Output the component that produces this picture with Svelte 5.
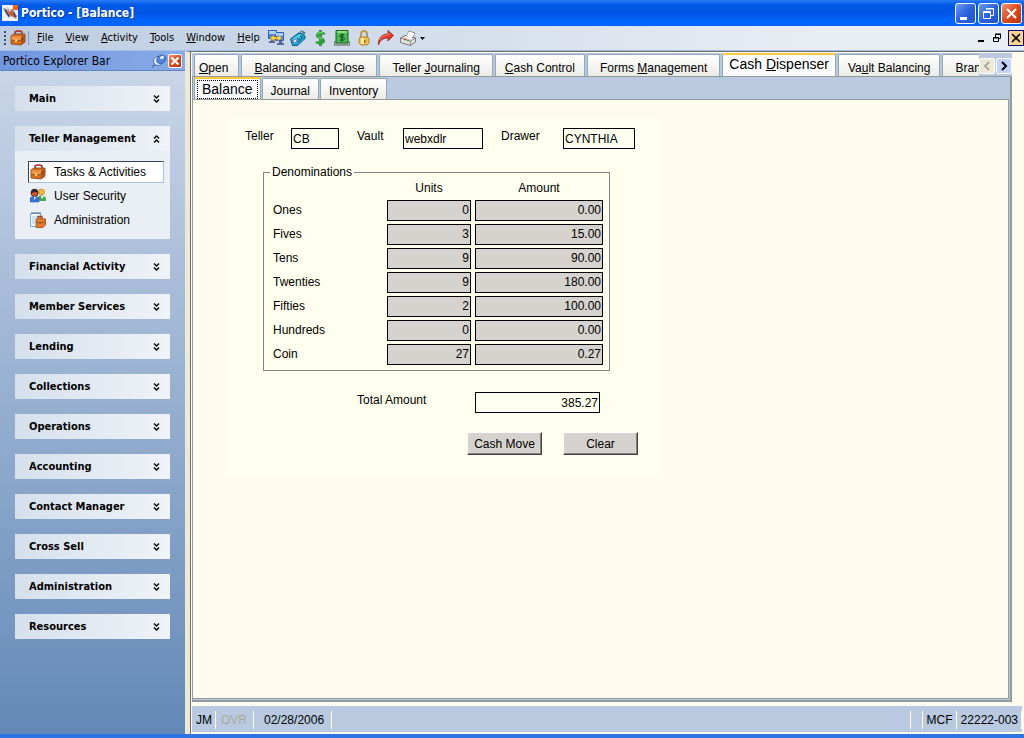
<script lang="ts">
  const menus = [
    ['F', 'ile'],
    ['V', 'iew'],
    ['A', 'ctivity'],
    ['T', 'ools'],
    ['W', 'indow'],
    ['H', 'elp']
  ];

  // before / access key / after
  const tabs = [
    { text: ['', 'O', 'pen'], kind: 'short' },
    { text: ['', 'B', 'alancing and Close'], kind: '' },
    { text: ['Teller ', 'J', 'ournaling'], kind: '' },
    { text: ['', 'C', 'ash Control'], kind: 'tight' },
    { text: ['Forms ', 'M', 'anagement'], kind: '' },
    { text: ['Cash ', 'D', 'ispenser'], kind: 'active' },
    { text: ['Va', 'u', 'lt Balancing'], kind: 'tight' },
    { text: ['Bran', '', ''], kind: '' }
  ];

  const sections = [
    'Main',
    'Teller Management',
    'Financial Activity',
    'Member Services',
    'Lending',
    'Collections',
    'Operations',
    'Accounting',
    'Contact Manager',
    'Cross Sell',
    'Administration',
    'Resources'
  ];

  const links = ['Tasks & Activities', 'User Security', 'Administration'];

  const rows = [
    { name: 'Ones', units: '0', amount: '0.00' },
    { name: 'Fives', units: '3', amount: '15.00' },
    { name: 'Tens', units: '9', amount: '90.00' },
    { name: 'Twenties', units: '9', amount: '180.00' },
    { name: 'Fifties', units: '2', amount: '100.00' },
    { name: 'Hundreds', units: '0', amount: '0.00' },
    { name: 'Coin', units: '27', amount: '0.27' }
  ];

  let open = $state('Teller Management');
  let selected = $state('Tasks & Activities');
</script>

{#snippet briefcase()}
  <svg class="icon" viewBox="0 0 16 16" aria-hidden="true">
    <path d="M5 4V2l2-1h3l2 1v2" fill="none" stroke="#a82a20" stroke-width="1.500" />
    <path d="M1 6l3-2h11v8l-4 3-10-1z" fill="#d9701f" stroke="#7c3d18" stroke-width=".8" />
    <path d="M1.500 6.500H11v4l-5 1-4.500-1z" fill="#f0994a" />
    <path d="M11 7l4-3v8l-4 3z" fill="#b4521a" />
    <path d="M1.500 10l5 1.500L11 10l4-2.500" fill="none" stroke="#7c3d18" stroke-width=".8" />
    <path d="M5 9.500h2v2.500H5z" fill="#f7d25a" />
  </svg>
{/snippet}

<div class="window">
  <header class="title-bar">
    <svg class="icon" viewBox="0 0 16 16" aria-hidden="true">
      <path d="M0 0h16v16H0z" fill="#f1f0f5" />
      <path d="M11 0h5v5h-5z" fill="#ff6400" />
      <path d="M1 3l4 1 4 7-2 2-3-4zM9 5l2-1 4 7-1 3-3-3z" fill="#858ba1" />
      <path d="M5 1l3 6 1-3 2 5 2 4-4-2-2-3z" fill="#e6541e" />
      <path d="M3 5l4 6M11 8l3 4" stroke="#303750" stroke-width="1.200" />
    </svg>
    <h1>Portico - [Balance]</h1>
    <div class="window-buttons">
      <button aria-label="Minimize">
        <svg viewBox="0 0 19 19"><path d="M4 13h7v3H4z" fill="#fff" /></svg>
      </button>
      <button aria-label="Restore">
        <svg viewBox="0 0 19 19" fill="none" stroke="#fff">
          <path d="M7.500 6V4.500h7v7H12M7 5h8" />
          <path d="M4.500 7.500h7v7h-7zM4 8.500h8" />
        </svg>
      </button>
      <button class="close" aria-label="Close">
        <svg viewBox="0 0 19 19"><path d="M5 5l9 9M14 5l-9 9" stroke="#fff" stroke-width="2.200" /></svg>
      </button>
    </div>
  </header>

  <nav class="menu-bar">
    <span class="grip"></span>
    {@render briefcase()}
    <span class="divider"></span>
    {#each menus as [key, rest]}
      <button class="menu"><u>{key}</u>{rest}</button>
    {/each}
    <div class="tools">
      <button aria-label="Transfer">
        <svg class="icon" viewBox="0 0 16 16">
          <path d="M.5.500h8v8h-8zM7.500 2.500h8v8h-8z" fill="#4c87e4" stroke="#2d5fb5" />
          <path d="M1 1h7v3H1zM8 3h7v3H8z" fill="#a8d0fa" />
          <path d="M1 11h6v2H1zM9 13h7v2H9zM3 9h2v2H3zM11 11h3v2h-3z" fill="#56699f" />
          <path d="M2 8l4-3v2h4V5l4 3-4 3V9H6v2z" fill="#ffdc4c" stroke="#b77b16" stroke-width=".6" />
        </svg>
      </button>
      <button aria-label="Tag">
        <svg class="icon" viewBox="0 0 16 16">
          <path d="M.5 9l8-6 5 1 2 4-8 7.500h-5z" fill="#22a4cb" stroke="#075d83" />
          <path d="M2 9l7-5 3 1-7 6z" fill="#55c6e3" />
          <path d="M8 12l5-5M10 6l2 1M7 8l2 2" stroke="#075d83" />
          <circle cx="5" cy="11" r="1.700" fill="#f4d9ff" stroke="#86549c" stroke-width=".6" />
          <path d="M10 3c0-3 4-2 4 0M12 3c3-3 4 1 1 2" fill="none" stroke="#16647e" />
        </svg>
      </button>
      <button aria-label="Cash">
        <svg class="icon" viewBox="0 0 16 16">
          <path d="M13 4c-3-2-8-1-7 2 1 2 6 2 6 5 0 2-4 3-7 1M9 0v16" fill="none" stroke="#686e65" stroke-width="2" />
          <path d="M12 4C9 2 4 3 5 6c1 2 6 2 6 5 0 2-4 3-7 1M8 0v16" fill="none" stroke="#27a537" stroke-width="2.200" />
          <path d="M11 3C8 2 5 3 5 5M7 7l3 2" fill="none" stroke="#8be878" />
        </svg>
      </button>
      <button aria-label="Dispense">
        <svg class="icon" viewBox="0 0 16 16">
          <path d="M0 12h16v3H0z" fill="#bec5c0" stroke="#56625a" />
          <path d="M2 .5h12V13H2z" fill="#4cb653" stroke="#17632a" />
          <path d="M3 1h10v2H3z" fill="#90df83" />
          <path d="M10 5H7.500C5.500 5 6 7.500 7.500 7.500H9c2 0 2 2.500 0 2.500H6M8 3.500v8" fill="none" stroke="#094318" />
        </svg>
      </button>
      <button aria-label="Lock">
        <svg class="icon" viewBox="0 0 16 16">
          <path d="M5 7V4c0-4 6-4 6 0v3" fill="none" stroke="#b99a5c" stroke-width="2" />
          <path d="M4 7h8l1 2v4l-2 2H5l-2-2V9z" fill="#f2bf52" stroke="#a96f23" stroke-width=".8" />
          <path d="M5 8h3v6H5z" fill="#fff0a4" />
          <path d="M8 10h1.500v3H8z" fill="#9e6820" />
        </svg>
      </button>
      <button aria-label="Go">
        <svg class="icon" viewBox="0 0 16 16">
          <path d="M.5 15C0 8 4 4 10 4V.5l5.500 5L10 11V8c-5 0-8 2-9.500 7z" fill="#e23625" stroke="#9d1e19" stroke-width=".8" />
          <path d="M2 10c1-3 4-5 9-5V3" fill="none" stroke="#ff8e73" />
        </svg>
      </button>
      <button class="print" aria-label="Print">
        <svg class="icon" viewBox="0 0 16 16">
          <path d="M6 7l3-6 6 2-3 6z" fill="#fff" stroke="#777" stroke-width=".8" />
          <path d="M.5 8L5 5.500 15.500 8v4l-5 3.500-10-3z" fill="#e2e0da" stroke="#5e5e5e" stroke-width=".8" />
          <path d="M.5 8l10 3 5-3M10.500 11v4" fill="none" stroke="#777" stroke-width=".8" />
          <path d="M6 7l3-5 5 2-3 5z" fill="#fff" />
          <path d="M4 9.500h2" stroke="#d2302a" stroke-width="1.500" />
          <path d="M7 10.500h2" stroke="#35a643" stroke-width="1.500" />
        </svg>
        <svg class="arrow" viewBox="0 0 5 3"><path d="M0 0h5L2.500 3z" /></svg>
      </button>
    </div>
    <div class="child-buttons">
      <button aria-label="Minimize child">
        <svg class="small-icon" viewBox="0 0 10 10"><path d="M2 7h6v2H2z" /></svg>
      </button>
      <button aria-label="Restore child">
        <svg class="small-icon" viewBox="0 0 10 10">
          <path d="M3.500 4V1.500h5v4H7M3 1h6M1.500 4.500h5v4h-5zM1 5h6" fill="none" stroke="#000" />
        </svg>
      </button>
      <button class="child-close" aria-label="Close child">
        <svg class="small-icon" viewBox="0 0 10 10"><path d="M1 1l8 8M9 1L1 9" stroke="#000" stroke-width="1.600" /></svg>
      </button>
    </div>
  </nav>

  <div class="work-area">
    <aside>
      <div class="explorer-title">
        <span>Portico Explorer Bar</span>
        <button aria-label="Pin">
          <svg class="icon" viewBox="0 0 16 16">
            <path d="M1 14l5-4" stroke="#5068a1" stroke-width="1.500" />
            <circle cx="7" cy="8" r="4.500" fill="#e1edff" stroke="#4470c2" />
            <path d="M6 9c-1-4 2-7 6-7 3 1 4 4 1 7-2 2-5 2-7 0z" fill="#5686dc" stroke="#3156a9" />
            <path d="M9 6c0-3 2-4 4-3l-1 3z" fill="#e1edff" />
          </svg>
        </button>
        <button class="close" aria-label="Close explorer bar">
          <svg class="small-icon" viewBox="0 0 10 10"><path d="M1.500 1.500l7 7M8.500 1.500l-7 7" stroke="#fff" stroke-width="2" /></svg>
        </button>
      </div>
      <div class="sections">
        {#each sections as section}
          <section>
            <button
              class="section-title"
              aria-expanded={open === section}
              onclick={() => (open = open === section ? '' : section)}
            >
              {section}
              <svg class="chevron" viewBox="0 0 7 8" fill="none" stroke="#000">
                {#if open === section}
                  <path d="M1 3.500L3.500 1 6 3.500M1 7.500L3.500 5 6 7.500" stroke-width="1.400" />
                {:else}
                  <path d="M1 .5L3.500 3 6 .5M1 4.500L3.500 7 6 4.500" stroke-width="1.400" />
                {/if}
              </svg>
            </button>
            {#if open === section}
              <div class="links">
                {#each links as link, i}
                  <a href="#{i}" class:selected={selected === link} onclick={() => (selected = link)}>
                    {#if i === 0}
                      {@render briefcase()}
                    {:else if i === 1}
                      <svg class="icon" viewBox="0 0 16 16" aria-hidden="true">
                        <circle cx="11.500" cy="4" r="3" fill="#f6b83e" stroke="#a56e1e" stroke-width=".6" />
                        <path d="M8 13V9c1-2 6-2 8 1v3z" fill="#43a957" />
                        <path d="M11 8l1 3 2-3" fill="#fff" />
                        <circle cx="4.500" cy="5" r="3.500" fill="#d7582d" stroke="#502b2c" />
                        <path d="M1 5c0-6 8-5 7 0L6 4z" fill="#33262e" />
                        <path d="M0 14v-4c2-2 7-2 9 0v4z" fill="#3d72d8" stroke="#2853a6" stroke-width=".5" />
                        <path d="M4 9l.5 3L6 9" fill="#fff" />
                      </svg>
                    {:else}
                      <svg class="icon" viewBox="0 0 16 16" aria-hidden="true">
                        <path d="M.5 1.500h10v13H.5z" fill="#eefaff" stroke="#7badcf" />
                        <path d="M2 0v2M4 0v2M6 0v2M8 0v2M10 0v2" stroke="#486f9b" />
                        <path d="M2 5h6M2 7h3M2 9h3M2 11h3" stroke="#a8cce2" />
                        <path d="M8 6V4.500h4V6" fill="none" stroke="#a33b20" stroke-width="1.300" />
                        <path d="M6 7l2-1 7.500 1v6L13 15.500H6z" fill="#e77a2d" stroke="#98461e" stroke-width=".8" />
                        <path d="M6 10l4 1 5-1M10 10v2" stroke="#7d421f" stroke-width=".8" fill="none" />
                      </svg>
                    {/if}
                    <span>{link}</span>
                  </a>
                {/each}
              </div>
            {/if}
          </section>
        {/each}
      </div>
    </aside>

    <main>
      <div class="tab-frame">
        <div class="tab-strip">
          <div class="tabs" role="tablist">
            {#each tabs as tab}
              <button role="tab" class="tab {tab.kind}" aria-selected={tab.kind === 'active'}
                >{tab.text[0]}<u>{tab.text[1]}</u>{tab.text[2]}</button
              >
            {/each}
          </div>
          <div class="scroll-buttons">
            <button class="back" aria-label="Scroll tabs left">
              <svg class="small-icon" viewBox="0 0 10 10"><path d="M7 1L3 5l4 4" fill="none" stroke="#aca899" stroke-width="2" /></svg>
            </button>
            <button aria-label="Scroll tabs right">
              <svg class="small-icon" viewBox="0 0 10 10"><path d="M3 1l4 4-4 4" fill="none" stroke="#000" stroke-width="2" /></svg>
            </button>
          </div>
        </div>
        <div class="pane">
          <div class="sub-tabs" role="tablist">
            <button role="tab" class="tab active" aria-selected="true"><span>Balance</span></button>
            <button role="tab" class="tab" aria-selected="false">Journal</button>
            <button role="tab" class="tab" aria-selected="false">Inventory</button>
          </div>
          <div class="page">
            <form onsubmit={(e) => e.preventDefault()}>
              <div class="who">
                <label for="teller">Teller</label>
                <input id="teller" class="teller" value="CB" />
                <label for="vault">Vault</label>
                <input id="vault" class="vault" value="webxdlr" />
                <label for="drawer" class="wide">Drawer</label>
                <input id="drawer" class="drawer" value="CYNTHIA" />
              </div>

              <fieldset>
                <legend>Denominations</legend>
                <table>
                  <thead>
                    <tr>
                      <td></td>
                      <th class="units" scope="col">Units</th>
                      <th class="amount" scope="col">Amount</th>
                    </tr>
                  </thead>
                  <tbody>
                    {#each rows as row}
                      <tr>
                        <th scope="row">{row.name}</th>
                        <td class="units"><input aria-label="{row.name} units" value={row.units} readonly /></td>
                        <td class="amount"><input aria-label="{row.name} amount" value={row.amount} readonly /></td>
                      </tr>
                    {/each}
                  </tbody>
                </table>
              </fieldset>

              <div class="total">
                <label for="total">Total Amount</label>
                <input id="total" value="385.27" />
              </div>

              <div class="actions">
                <button type="button">Cash Move</button>
                <button type="button">Clear</button>
              </div>
            </form>
          </div>
        </div>
      </div>

      <footer>
        <span>JM</span>
        <span class="off">OVR</span>
        <span class="date">02/28/2006</span>
        <span class="filler"></span>
        <span class="blank"></span>
        <span>MCF</span>
        <span>22222-003</span>
      </footer>
    </main>
  </div>
</div>

<style>
  :global(body) {
    background: #2b74e2;
  }

  * {
    box-sizing: border-box;
  }

  .window {
    min-height: 100vh;
    display: flex;
    flex-direction: column;
    border-bottom: 4px solid #2b74e2;
    font-family: 'Liberation Sans', Arial, sans-serif;
    font-size: 12px;
    line-height: 16px;
    color: #000;
  }

  button {
    margin: 0;
    padding: 0;
    border: 0;
    background: none;
    font: inherit;
    color: inherit;
  }

  input {
    margin: 0;
    border: 1px solid #000;
    border-radius: 0;
    height: 21px;
    padding: 0 1px;
    background: #ffffef;
    font: inherit;
    color: inherit;
  }

  svg {
    display: block;
  }

  .icon {
    width: 16px;
    height: 16px;
    flex: none;
  }

  .small-icon {
    width: 10px;
    height: 10px;
  }

  .title-bar {
    display: flex;
    align-items: center;
    height: 26px;
    padding: 0 2px;
    background: linear-gradient(#2a7cf8, #0058e6 20%, #0055e5 50%, #0066ff 80%, #0061fc);
  }

  .title-bar h1 {
    flex: 1;
    margin: 0 0 0 3px;
    font: bold 12px/16px 'DejaVu Sans Condensed', Tahoma, sans-serif;
    color: #fff;
    text-shadow: 1px 1px #0a3a9a;
  }

  .window-buttons {
    display: flex;
    gap: 2px;
  }

  .window-buttons button {
    width: 21px;
    height: 21px;
    border: 1px solid #fff;
    border-radius: 3px;
    background: linear-gradient(135deg, #6f9bf2, #2b62dc 50%, #2254c9);
  }

  .window-buttons .close,
  .explorer-title .close {
    background: linear-gradient(135deg, #f0926f, #dd4c21 50%, #b93108);
  }

  .menu-bar {
    display: flex;
    align-items: center;
    height: 25px;
    padding: 0 0 0 4px;
    border-bottom: 1px solid #9ebef5;
    background: linear-gradient(90deg, #bccce1, #e9edf4 80%);
    font: 11px/16px 'DejaVu Sans Condensed', Tahoma, sans-serif;
  }

  .grip {
    width: 2px;
    height: 15px;
    margin-right: 4px;
    background: repeating-linear-gradient(#34507c 0 2px, transparent 2px 4px);
  }

  .divider {
    width: 1px;
    height: 14px;
    margin: 0 2px;
    background: #7d9fd0;
  }

  .menu {
    padding: 0 6px;
  }

  .tools {
    display: flex;
    gap: 6px;
    margin-left: 2px;
  }

  .print {
    display: flex;
    align-items: center;
    gap: 4px;
  }

  .arrow {
    width: 5px;
    height: 3px;
  }

  .child-buttons {
    display: flex;
    align-items: center;
    gap: 6px;
    margin-left: auto;
  }

  .child-close {
    display: grid;
    place-items: center;
    width: 16px;
    height: 16px;
    border: 1px solid #00007f;
    background: #ffd490;
  }

  .work-area {
    flex: 1;
    display: flex;
  }

  aside {
    flex: none;
    display: flex;
    flex-direction: column;
    width: 185px;
  }

  .explorer-title {
    display: flex;
    align-items: center;
    gap: 1px;
    height: 20px;
    padding: 0 3px;
    border-bottom: 1px solid #5d86bf;
    background: linear-gradient(90deg, #7196df, #88aae6);
    font: 12px/16px 'DejaVu Sans Condensed', Tahoma, sans-serif;
  }

  .explorer-title span {
    flex: 1;
  }

  .explorer-title .close {
    display: grid;
    place-items: center;
    width: 14px;
    height: 14px;
    border: 1px solid #fff;
    border-radius: 2px;
  }

  .sections {
    flex: 1;
    display: flex;
    flex-direction: column;
    gap: 15px;
    padding: 15px;
    background: linear-gradient(#c9d5e8, #6389b8);
  }

  .section-title {
    display: flex;
    align-items: center;
    justify-content: space-between;
    width: 100%;
    height: 25px;
    padding: 0 10px 0 14px;
    background: linear-gradient(90deg, #d5e0ec, #f0f3f7);
    font: bold 11px/16px 'DejaVu Sans Condensed', Tahoma, sans-serif;
  }

  .chevron {
    width: 7px;
    height: 8px;
  }

  .links {
    display: flex;
    flex-direction: column;
    gap: 2px;
    padding: 10px 6px 8px 13px;
    background: #e9eff4;
  }

  .links a {
    display: flex;
    align-items: center;
    gap: 8px;
    height: 22px;
    padding: 0 1px;
    border: 1px solid transparent;
    color: #000;
    text-decoration: none;
  }

  .links .selected {
    border-color: #34405a #a9bfe4 #a9bfe4 #34405a;
    background: #fff;
  }

  main {
    flex: 1;
    min-width: 0;
    display: flex;
    flex-direction: column;
    gap: 4px;
    padding: 1px 2px 2px 2px;
    border-top: 1px solid #716f64;
    border-left: 5px solid #ece9d8;
    background: #fffbef;
    box-shadow: inset 1px 0 #716f64;
  }

  .tab-frame {
    flex: 1;
    display: flex;
    flex-direction: column;
    margin-right: 10px;
    background: #b9c9df;
  }

  .tab-strip {
    display: flex;
    align-items: flex-end;
    height: 23px;
    padding-left: 2px;
  }

  .tabs {
    flex: 1;
    min-width: 0;
    display: flex;
    align-items: flex-end;
    gap: 2px;
    height: 23px;
    overflow: hidden;
  }

  .tab {
    flex: none;
    height: 22px;
    padding: 4px 12px 0;
    border: 1px solid #91a7b4;
    border-bottom: 0;
    border-radius: 2px 2px 0 0;
    background: linear-gradient(#fff, #ecebe6);
    white-space: nowrap;
  }

  .tab.short {
    padding: 4px 10px 0 4px;
  }

  .tab.tight {
    padding: 4px 9px 0;
  }

  .tab.active {
    height: 23px;
    padding: 0 6px 3px;
    border-top: 2px solid #ffc73c;
    background: #fcfcfe;
    font-size: 14px;
  }

  .scroll-buttons {
    display: flex;
    gap: 1px;
    height: 18px;
  }

  .scroll-buttons button {
    display: grid;
    place-items: center;
    width: 16px;
    height: 16px;
    border: 1px solid #fff;
    border-radius: 2px;
    background: #c1d3fb;
  }

  .scroll-buttons .back {
    background: #ece9d8;
  }

  .pane {
    flex: 1;
    display: flex;
    flex-direction: column;
    padding: 0 1px 1px 0;
    border: 1px solid #919b9c;
    border-right-width: 2px;
    border-bottom-width: 2px;
  }

  .sub-tabs {
    display: flex;
    align-items: flex-end;
    gap: 1px;
    height: 22px;
    padding-left: 1px;
  }

  .sub-tabs .tab {
    height: 21px;
    padding: 4px 8px 0;
  }

  .sub-tabs .active {
    height: 22px;
    padding: 0 2px;
  }

  .sub-tabs span {
    display: block;
    padding: 0 4px 1px;
    border: 1px dotted #000;
  }

  .page {
    flex: 1;
    padding: 19px 33px;
    border: 1px solid #919b9c;
    border-left: 0;
    background: #fffbef;
  }

  form {
    width: 436px;
    padding: 9px 24px 20px 19px;
    background: #ffffef;
  }

  .who {
    display: flex;
    align-items: flex-start;
  }

  .who label {
    width: 46px;
  }

  .who .wide {
    width: 62px;
  }

  .teller {
    width: 48px;
    margin-right: 18px;
  }

  .vault {
    width: 80px;
    margin-right: 18px;
  }

  .drawer {
    width: 72px;
  }

  fieldset {
    width: 347px;
    margin: 15px 0 0 18px;
    padding: 0 6px 4px 9px;
    border: 1px solid #848284;
  }

  legend {
    margin-left: -3px;
    padding: 0 2px;
  }

  table {
    width: 100%;
    border-collapse: collapse;
    table-layout: fixed;
  }

  thead tr {
    height: 18px;
  }

  tbody tr {
    height: 24px;
  }

  th,
  td {
    padding: 0;
    font-weight: normal;
    text-align: left;
  }

  .units {
    width: 88px;
    padding-right: 4px;
  }

  .amount {
    width: 128px;
  }

  thead th {
    text-align: center;
    vertical-align: top;
  }

  td input {
    display: block;
    width: 100%;
    background: #d6d3ce;
    text-align: right;
  }

  .total {
    display: flex;
    align-items: flex-start;
    margin: 21px 0 0 112px;
  }

  .total label {
    width: 118px;
  }

  .total input {
    width: 125px;
    text-align: right;
  }

  .actions {
    display: flex;
    justify-content: flex-end;
    gap: 21px;
    margin-top: 19px;
  }

  .actions button {
    width: 75px;
    height: 23px;
    border: 1px solid;
    border-color: #fff #424142 #424142 #fff;
    background: #d6d3ce;
    box-shadow: inset -1px -1px #848284;
  }

  footer {
    display: flex;
    align-items: center;
    height: 26px;
    padding-top: 2px;
    background: #b9c9df;
  }

  footer span {
    display: flex;
    align-items: center;
    height: 18px;
    padding: 0 3px 0 4px;
    border-right: 1px solid #fffbef;
  }

  footer .off {
    padding: 0 6px 0 5px;
    color: #aca899;
  }

  footer .date {
    padding: 0 7px 0 10px;
  }

  footer .filler {
    flex: 1;
  }

  footer .blank {
    width: 12px;
  }
</style>
